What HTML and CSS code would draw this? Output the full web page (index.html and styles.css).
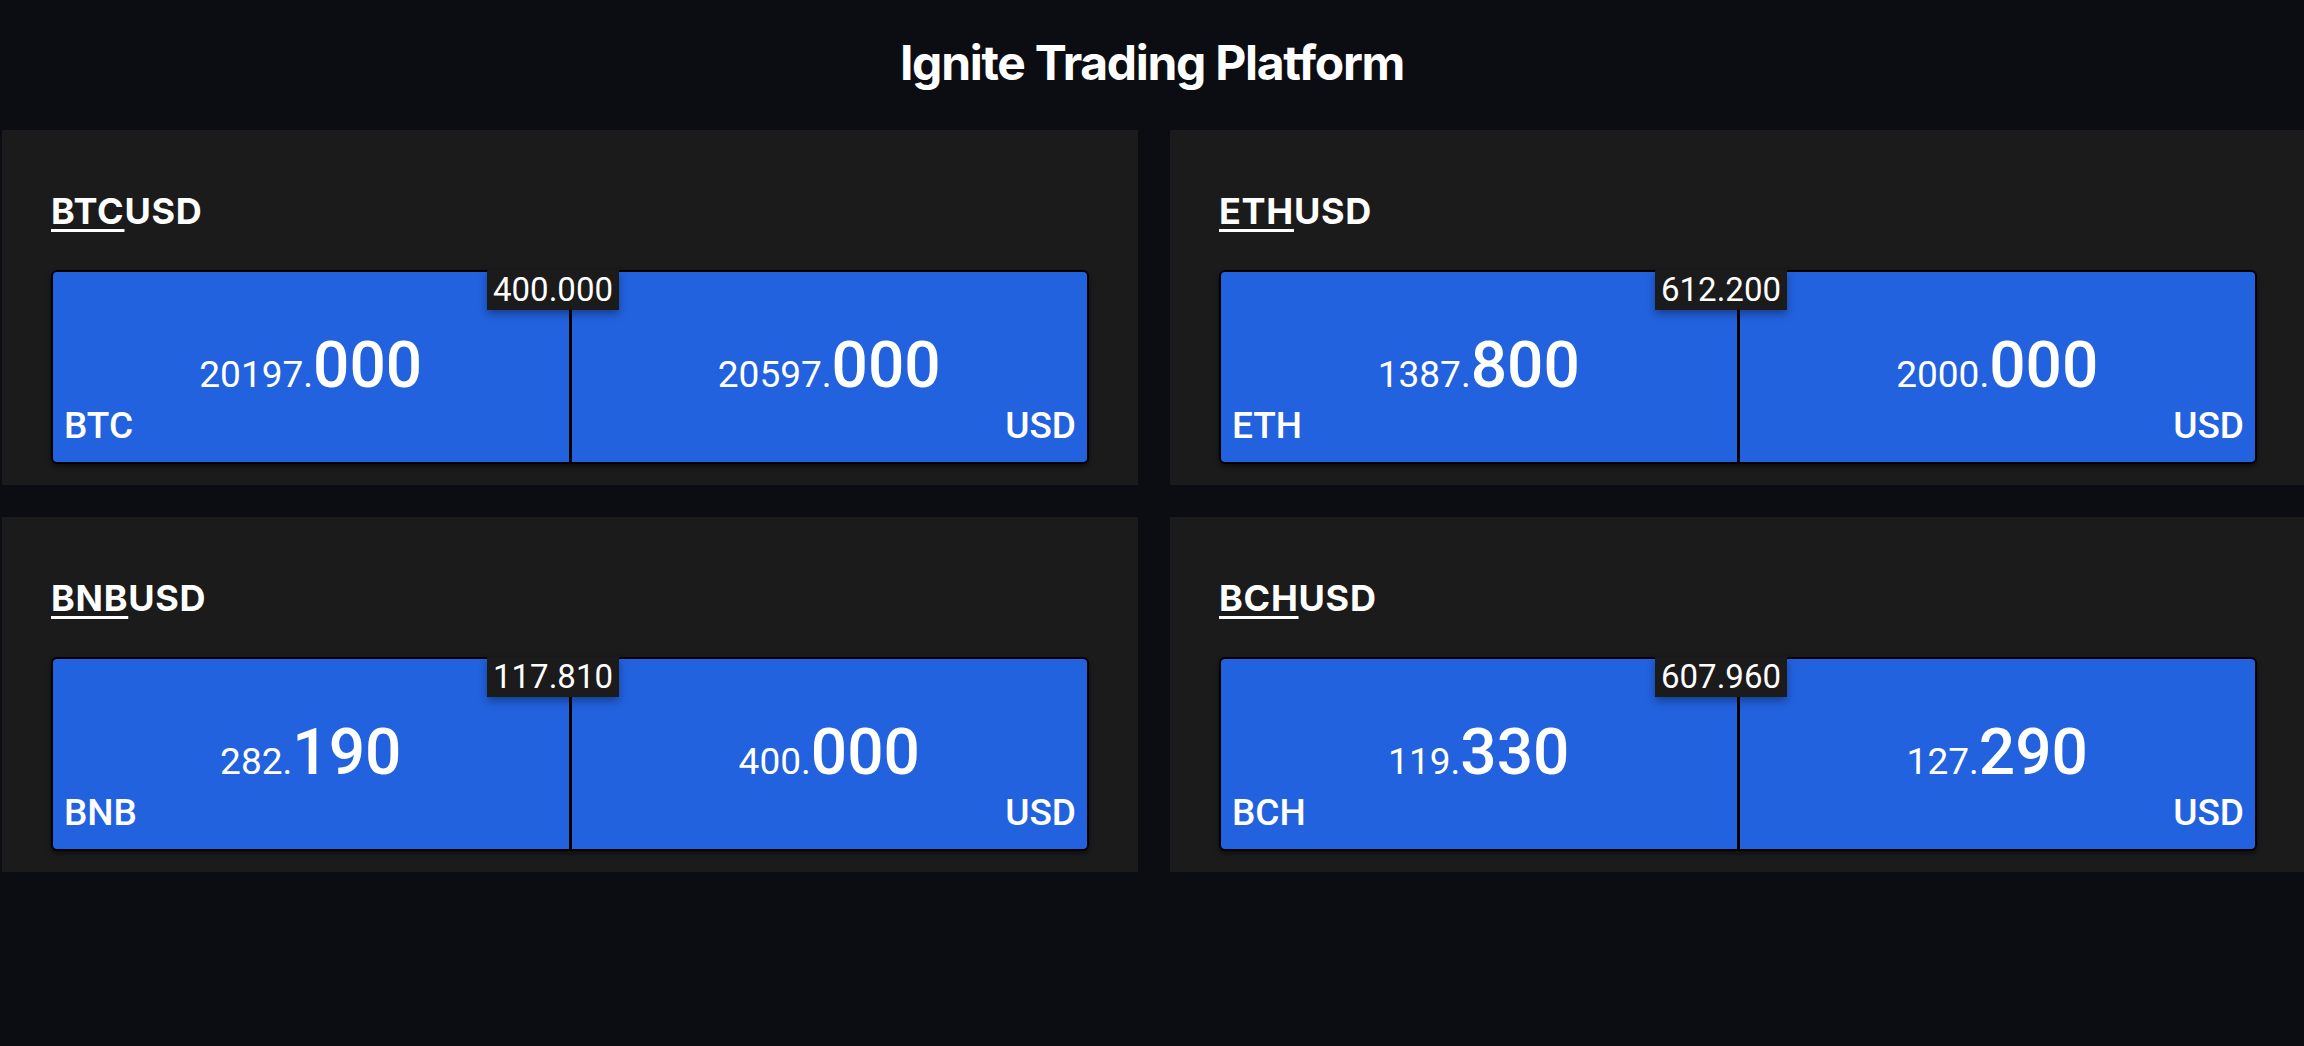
FILE: index.html
```html
<!DOCTYPE html>
<html lang="en">
<head>
<meta charset="utf-8">
<title>Ignite Trading Platform</title>
<link rel="stylesheet" href="styles.css">
</head>
<body>
<header class="top">
  <h1 class="title">Ignite Trading Platform</h1>
</header>
<main class="grid">
  <section class="card">
    <h2 class="pair"><u class="base">BTC</u>USD</h2>
    <div class="tile">
      <div class="side side-left">
        <div class="price"><span class="small">20197.</span><span class="big">000</span></div>
        <div class="ccy">BTC</div>
      </div>
      <div class="side side-right">
        <div class="price"><span class="small">20597.</span><span class="big">000</span></div>
        <div class="ccy">USD</div>
      </div>
      <div class="spread">400.000</div>
    </div>
  </section>
  <section class="card">
    <h2 class="pair"><u class="base">ETH</u>USD</h2>
    <div class="tile">
      <div class="side side-left">
        <div class="price"><span class="small">1387.</span><span class="big">800</span></div>
        <div class="ccy">ETH</div>
      </div>
      <div class="side side-right">
        <div class="price"><span class="small">2000.</span><span class="big">000</span></div>
        <div class="ccy">USD</div>
      </div>
      <div class="spread">612.200</div>
    </div>
  </section>
  <section class="card">
    <h2 class="pair"><u class="base">BNB</u>USD</h2>
    <div class="tile">
      <div class="side side-left">
        <div class="price"><span class="small">282.</span><span class="big">190</span></div>
        <div class="ccy">BNB</div>
      </div>
      <div class="side side-right">
        <div class="price"><span class="small">400.</span><span class="big">000</span></div>
        <div class="ccy">USD</div>
      </div>
      <div class="spread">117.810</div>
    </div>
  </section>
  <section class="card">
    <h2 class="pair"><u class="base">BCH</u>USD</h2>
    <div class="tile">
      <div class="side side-left">
        <div class="price"><span class="small">119.</span><span class="big">330</span></div>
        <div class="ccy">BCH</div>
      </div>
      <div class="side side-right">
        <div class="price"><span class="small">127.</span><span class="big">290</span></div>
        <div class="ccy">USD</div>
      </div>
      <div class="spread">607.960</div>
    </div>
  </section>
</main>
</body>
</html>
```
FILE: styles.css
```css
html, body {
  margin: 0;
  padding: 0;
  overflow: hidden;
}
body {
  background: #0c0d12;
  color: #ffffff;
  font-family: "Inter", "Liberation Sans", sans-serif;
  width: 2304px;
  height: 1046px;
}
.top {
  height: 130px;
  box-sizing: border-box;
  padding-top: 34px;
  display: flex;
  justify-content: center;
}
.title {
  margin: 0;
  font-size: 48px;
  line-height: 58px;
  font-weight: 700;
  letter-spacing: -0.027em;
}
.grid {
  display: grid;
  grid-template-columns: 1136px 1136px;
  column-gap: 32px;
  row-gap: 32px;
  margin-left: 2px;
}
.card {
  background: #1b1b1b;
  padding: 61px 49px 21px 49px;
}
.pair {
  margin: 0 0 39px 0;
  font-size: 36px;
  line-height: 40px;
  height: 40px;
  font-weight: 700;
  letter-spacing: 0.02em;
}
.base {
  text-decoration: underline;
  text-decoration-thickness: 3px;
  text-underline-offset: 5px;
}
.tile {
  position: relative;
  display: flex;
  gap: 3px;
  height: 194px;
  box-sizing: border-box;
  border: 2px solid #000;
  border-radius: 6px;
  background: #000;
  box-shadow: 0 3px 5px rgba(0, 0, 0, 0.45);
  font-family: "Roboto", "Liberation Sans", sans-serif;
}
.side {
  flex: 1;
  background: #2262df;
  display: flex;
  flex-direction: column;
  padding: 0 11px;
}
.side-left { border-radius: 4px 0 0 4px; }
.side-right { border-radius: 0 4px 4px 0; }
.price {
  margin-top: 62px;
  height: 64px;
  font-size: 64px;
  line-height: 1;
  text-align: center;
  white-space: nowrap;
}
.small {
  font-size: 37px;
  font-weight: 400;
}
.big {
  font-weight: 500;
}
.ccy {
  margin-top: 10px;
  font-size: 37px;
  line-height: 36px;
  font-weight: 500;
}
.side-right .ccy {
  text-align: right;
}
.spread {
  position: absolute;
  top: -2px;
  left: calc(50% - 83px);
  height: 40px;
  line-height: 40px;
  padding: 0 6px;
  background: #1b1b1b;
  font-size: 33px;
  font-weight: 400;
  box-shadow: 0 4px 8px rgba(0, 0, 0, 0.35);
}
```
